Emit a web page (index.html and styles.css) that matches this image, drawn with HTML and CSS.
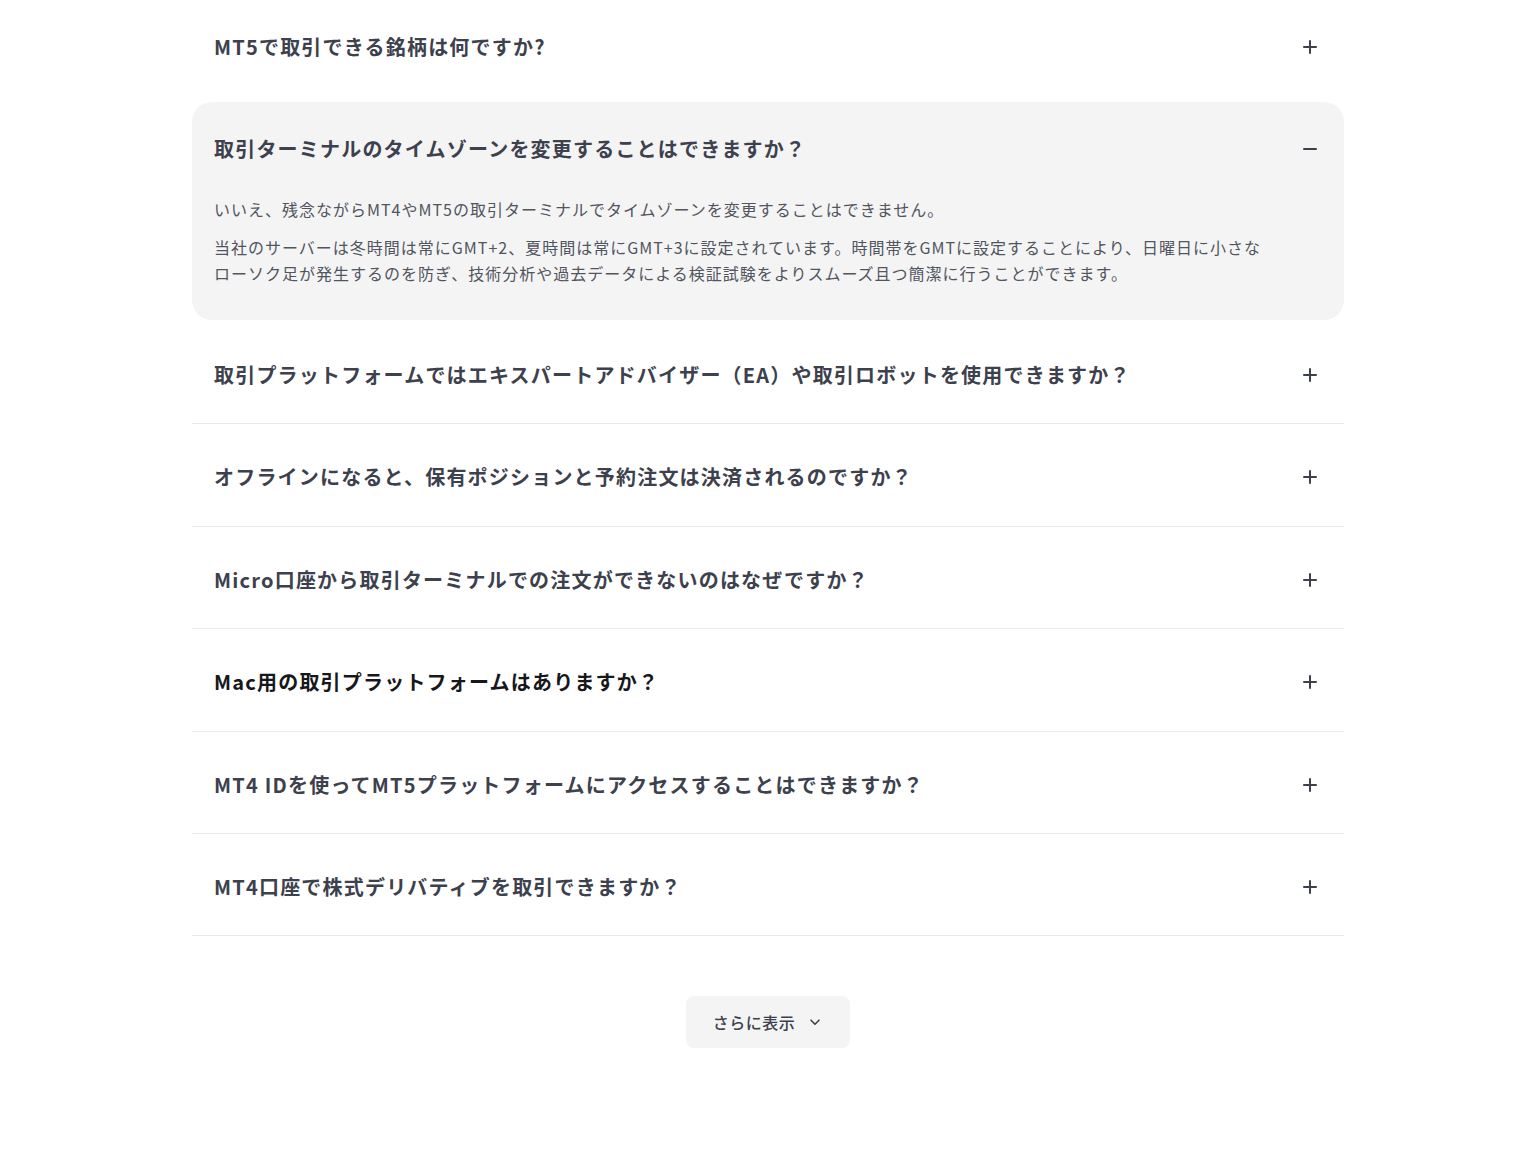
FILE: index.html
```html
<!DOCTYPE html>
<html lang="ja">
<head>
<meta charset="utf-8">
<title>FAQ</title>
<link rel="stylesheet" href="styles.css">
</head>
<body>
<main class="faq">
  <div class="faq-list">
    <div class="faq-item first before-open">
      <div class="faq-q"><span class="q-text">MT5で取引できる銘柄は何ですか?</span><span class="icon plus"></span></div>
    </div>
    <div class="faq-item open">
      <div class="faq-q"><span class="q-text">取引ターミナルのタイムゾーンを変更することはできますか？</span><span class="icon minus"></span></div>
      <div class="faq-a">
        <p>いいえ、残念ながらMT4やMT5の取引ターミナルでタイムゾーンを変更することはできません。</p>
        <p>当社のサーバーは冬時間は常にGMT+2、夏時間は常にGMT+3に設定されています。時間帯をGMTに設定することにより、日曜日に小さなローソク足が発生するのを防ぎ、技術分析や過去データによる検証試験をよりスムーズ且つ簡潔に行うことができます。</p>
      </div>
    </div>
    <div class="faq-item">
      <div class="faq-q"><span class="q-text">取引プラットフォームではエキスパートアドバイザー（EA）や取引ロボットを使用できますか？</span><span class="icon plus"></span></div>
    </div>
    <div class="faq-item">
      <div class="faq-q"><span class="q-text">オフラインになると、保有ポジションと予約注文は決済されるのですか？</span><span class="icon plus"></span></div>
    </div>
    <div class="faq-item">
      <div class="faq-q"><span class="q-text">Micro口座から取引ターミナルでの注文ができないのはなぜですか？</span><span class="icon plus"></span></div>
    </div>
    <div class="faq-item hover">
      <div class="faq-q"><span class="q-text">Mac用の取引プラットフォームはありますか？</span><span class="icon plus"></span></div>
    </div>
    <div class="faq-item">
      <div class="faq-q"><span class="q-text">MT4 IDを使ってMT5プラットフォームにアクセスすることはできますか？</span><span class="icon plus"></span></div>
    </div>
    <div class="faq-item">
      <div class="faq-q"><span class="q-text">MT4口座で株式デリバティブを取引できますか？</span><span class="icon plus"></span></div>
    </div>
  </div>
  <div class="more-wrap">
    <button class="more-btn" type="button">さらに表示
      <svg class="chev" width="12" height="12" viewBox="0 0 12 12" fill="none"><path d="M2 4.2 6 8.2 10 4.2" stroke="#3d414d" stroke-width="1.6" stroke-linecap="round" stroke-linejoin="round"/></svg>
    </button>
  </div>
</main>
</body>
</html>
```
FILE: styles.css
```css
html, body {
  margin: 0;
  padding: 0;
  background: #ffffff;
}
body {
  font-family: "Noto Sans CJK JP", "Noto Sans", sans-serif;
  color: #3d414d;
}
.faq {
  width: 1152px;
  margin: 0 auto;
}
.faq-list {
  display: flex;
  flex-direction: column;
}
.faq-item {
  border-bottom: 1px solid #ebebec;
}
.faq-item.before-open {
  border-bottom-color: transparent;
}
.faq-q {
  display: flex;
  justify-content: space-between;
  align-items: center;
  padding: 42px 22px 37.4px 22px;
}
.faq-item.first .faq-q {
  padding-top: 36px;
}
.q-text {
  font-size: 20px;
  line-height: 22px;
  font-weight: 600;
  letter-spacing: 1.2px;
  color: #3d414d;
}
.faq-item.hover .q-text {
  color: #17181c;
}
.icon {
  position: relative;
  width: 24px;
  height: 20px;
  flex: none;
}
.icon::before,
.icon::after {
  content: "";
  position: absolute;
  background: #3d414d;
  border-radius: 1px;
}
.icon::before {
  left: 5px;
  top: 9px;
  width: 14px;
  height: 2px;
}
.plus::after {
  left: 11px;
  top: 3px;
  width: 2px;
  height: 14px;
}
.minus::after {
  display: none;
}
.faq-item.open {
  background: #f4f4f5;
  border-radius: 20px;
  border-bottom: none;
  margin: 6px 0 1.6px;
}
.faq-item.open .faq-q {
  padding: 36px 22px 36px 22px;
}
.faq-a {
  padding: 0 68px 34px 22px;
}
.faq-a p {
  margin: 0;
  font-size: 16px;
  line-height: 26px;
  letter-spacing: 1px;
  color: #51555e;
}
.faq-a p + p {
  margin-top: 12px;
}
.more-wrap {
  display: flex;
  justify-content: center;
  padding-top: 60px;
}
.more-btn {
  display: flex;
  align-items: center;
  gap: 14px;
  height: 52px;
  padding: 0 29px 0 27px;
  border: none;
  border-radius: 8px;
  background: #f4f4f5;
  font-family: "Noto Sans CJK JP", "Noto Sans", sans-serif;
  font-size: 16px;
  font-weight: 500;
  letter-spacing: 0.5px;
  color: #3d414d;
}
.chev {
  display: block;
}
```
